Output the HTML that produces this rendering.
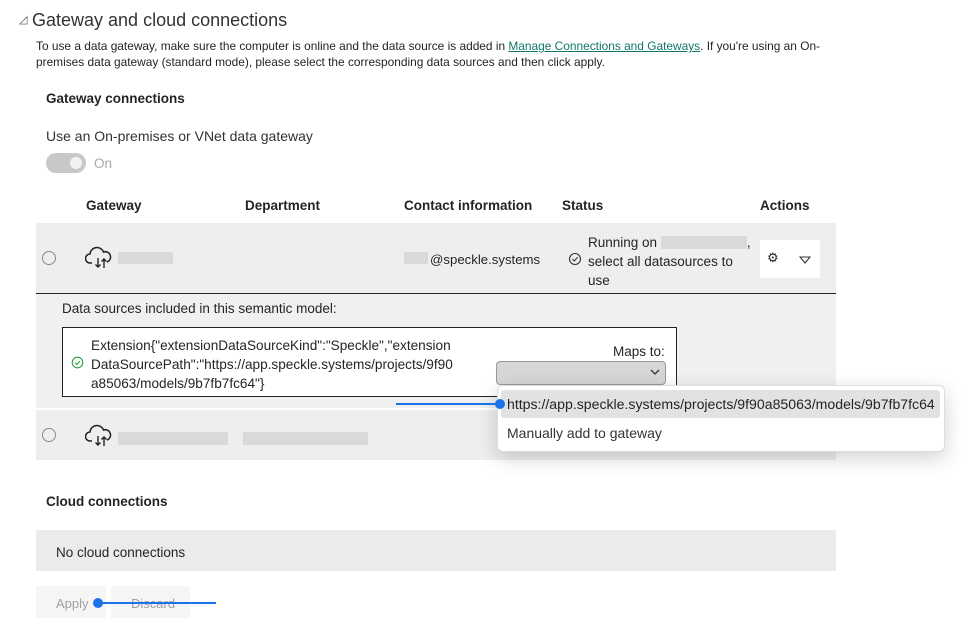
<!DOCTYPE html>
<html><head><meta charset="utf-8"><style>
body{margin:0;width:968px;height:633px;background:#fff;font-family:"Liberation Sans",sans-serif;color:#252423;position:relative;overflow:hidden}
.a{position:absolute;white-space:nowrap}
.b{font-weight:bold;font-size:13.5px}
.g{background:#d9d9d9;position:absolute}
</style></head><body>
<div class="a" style="left:19px;top:13px;font-size:11px;color:#555">◿</div>
<div class="a" style="left:32px;top:10px;font-size:18px;color:#333">Gateway and cloud connections</div>
<div class="a" style="left:36px;top:38px;font-size:11.9px;line-height:16px;color:#252423">To use a data gateway, make sure the computer is online and the data source is added in <span style="color:#117865;text-decoration:underline">Manage Connections and Gateways</span>. If you're using an On-<br>premises data gateway (standard mode), please select the corresponding data sources and then click apply.</div>
<div class="a b" style="left:46px;top:91px">Gateway connections</div>
<div class="a" style="left:46px;top:128px;font-size:14px;color:#333">Use an On-premises or VNet data gateway</div>
<div class="a" style="left:46px;top:153px;width:40px;height:20px;border-radius:10px;background:#c8c8c8"><div style="position:absolute;right:4px;top:4px;width:12px;height:12px;border-radius:6px;background:#f3f3f3"></div></div>
<div class="a" style="left:94px;top:156px;font-size:13.5px;color:#a8a8a8">On</div>
<div class="a b" style="left:86px;top:198px">Gateway</div>
<div class="a b" style="left:245px;top:198px">Department</div>
<div class="a b" style="left:404px;top:198px">Contact information</div>
<div class="a b" style="left:562px;top:198px">Status</div>
<div class="a b" style="left:760px;top:198px">Actions</div>

<div class="a" style="left:36px;top:223px;width:800px;height:70px;background:#eeeeee;border-bottom:1.5px solid #222"></div>
<div class="a" style="left:42px;top:251px;width:12px;height:12px;border:1.5px solid #8a8a8a;border-radius:50%"></div>
<svg class="a" style="left:85px;top:244px" width="30" height="28" viewBox="0 0 30 28"><path d="M7 19H5a4.5 4.5 0 0 1 0-9 7 7 0 0 1 13.5-2A5 5 0 0 1 22 18" fill="none" stroke="#222" stroke-width="1.5"/><path d="M13 14v9M10.5 20.5 13 23l2.5-2.5M19 24v-9M16.5 17.5 19 15l2.5 2.5" fill="none" stroke="#222" stroke-width="1.4"/></svg>
<div class="g" style="left:118px;top:252px;width:55px;height:12px"></div>
<div class="g" style="left:404px;top:252px;width:24px;height:12px"></div>
<div class="a" style="left:430px;top:252px;font-size:13.2px">@speckle.systems</div>
<svg class="a" style="left:568px;top:252px" width="14" height="14"><circle cx="7" cy="7" r="5.5" fill="none" stroke="#333" stroke-width="1.1"/><path d="M4.5 7.2 6.3 9 9.6 5.3" fill="none" stroke="#333" stroke-width="1.1"/></svg>
<div class="a" style="left:588px;top:233px;font-size:13.5px;line-height:19px">Running on <span style="display:inline-block;width:86px;height:13px;background:#d9d9d9;vertical-align:-2px"></span>,<br>select all datasources to<br>use</div>
<div class="a" style="left:760px;top:240px;width:60px;height:38px;background:#fff"></div>
<div class="a" style="left:767px;top:250px;font-size:13px">⚙</div>
<svg class="a" style="left:799px;top:256px" width="12" height="8"><path d="M1 1h10L6 7z" fill="none" stroke="#333" stroke-width="1.1"/></svg>

<div class="a" style="left:36px;top:294px;width:800px;height:114px;background:#f0f0f0"></div>
<div class="a" style="left:62px;top:301px;font-size:13.5px">Data sources included in this semantic model:</div>
<div class="a" style="left:62px;top:327px;width:613px;height:68px;border:1.3px solid #222;background:#fff"></div>
<svg class="a" style="left:71px;top:356px" width="13" height="13"><circle cx="6.5" cy="6.5" r="5.3" fill="none" stroke="#2e9e3e" stroke-width="1.1"/><path d="M4 6.7 5.8 8.5 9 5" fill="none" stroke="#2e9e3e" stroke-width="1.1"/></svg>
<div class="a" style="left:91px;top:336px;font-size:13.6px;line-height:19px">Extension{"extensionDataSourceKind":"Speckle","extension<br>DataSourcePath":"https://app.speckle.systems/projects/9f90<br>a85063/models/9b7fb7fc64"}</div>
<div class="a" style="left:613px;top:344px;font-size:13.5px">Maps to:</div>
<div class="a" style="left:496px;top:361px;width:168px;height:22px;background:#d6d6d6;border:1px solid #999;border-radius:4px"></div>
<svg class="a" style="left:650px;top:369px" width="10" height="7"><path d="M1 1 5 5 9 1" fill="none" stroke="#333" stroke-width="1.3"/></svg>

<div class="a" style="left:36px;top:410px;width:800px;height:50px;background:#eeeeee"></div>
<div class="a" style="left:42px;top:428px;width:12px;height:12px;border:1.5px solid #8a8a8a;border-radius:50%"></div>
<svg class="a" style="left:85px;top:422px" width="30" height="28" viewBox="0 0 30 28"><path d="M7 19H5a4.5 4.5 0 0 1 0-9 7 7 0 0 1 13.5-2A5 5 0 0 1 22 18" fill="none" stroke="#222" stroke-width="1.5"/><path d="M13 14v9M10.5 20.5 13 23l2.5-2.5M19 24v-9M16.5 17.5 19 15l2.5 2.5" fill="none" stroke="#222" stroke-width="1.4"/></svg>
<div class="g" style="left:118px;top:432px;width:110px;height:13px"></div>
<div class="g" style="left:243px;top:432px;width:125px;height:13px"></div>

<div class="a" style="left:497px;top:385px;width:446px;height:65px;background:#fff;border:1px solid #ddd;border-radius:6px;box-shadow:0 6px 20px rgba(0,0,0,0.18)"></div>
<div class="a" style="left:501px;top:390px;width:439px;height:28px;background:#e2e2e2;border-radius:3px"></div>
<div class="a" style="left:507px;top:396px;font-size:14.1px">https://app.speckle.systems/projects/9f90a85063/models/9b7fb7fc64</div>
<div class="a" style="left:507px;top:425px;font-size:14px;color:#333">Manually add to gateway</div>
<div class="a" style="left:396px;top:403px;width:104px;height:2px;background:#1a73e8"></div>
<div class="a" style="left:495px;top:399px;width:10px;height:10px;border-radius:50%;background:#1a73e8"></div>

<div class="a b" style="left:46px;top:494px">Cloud connections</div>
<div class="a" style="left:36px;top:530px;width:800px;height:41px;background:#ebebeb"></div>
<div class="a" style="left:56px;top:545px;font-size:13.5px">No cloud connections</div>
<div class="a" style="left:36px;top:586px;width:70px;height:32px;background:#f5f5f5"></div>
<div class="a" style="left:111px;top:586px;width:79px;height:32px;background:#f5f5f5"></div>
<div class="a" style="left:56px;top:596px;font-size:13px;color:#a0a0a0">Apply</div>
<div class="a" style="left:131px;top:596px;font-size:13px;color:#a0a0a0">Discard</div>
<div class="a" style="left:98px;top:602px;width:118px;height:2px;background:#1a73e8"></div>
<div class="a" style="left:93px;top:598px;width:10px;height:10px;border-radius:50%;background:#1a73e8"></div>
</body></html>
